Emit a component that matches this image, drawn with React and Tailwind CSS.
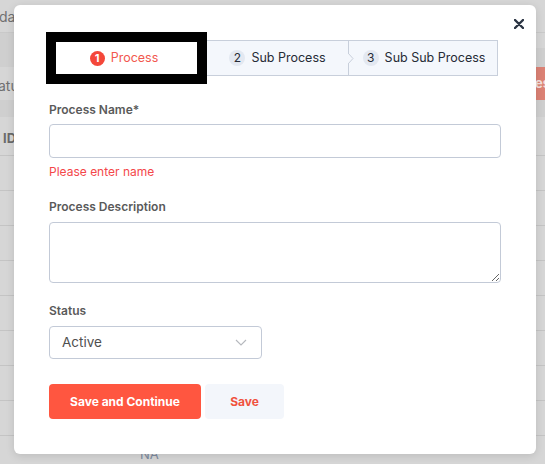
import React from "react";

function Step({ n, label, active }) {
  return (
    <div className="flex items-center gap-[6px]">
      <span
        className={
          active
            ? "flex h-[15px] w-[15px] items-center justify-center rounded-full bg-[#f4473a] text-[11px] font-bold leading-none text-white"
            : "flex h-[16px] w-[16px] items-center justify-center rounded-full bg-[#e3e8f1] text-[12px] leading-none text-[#262b36]"
        }
      >
        {n}
      </span>
      <span className={active ? "text-[12.5px] text-[#f2584f]" : "text-[12.5px] text-[#262b36]"}>{label}</span>
    </div>
  );
}

export default function App() {
  const rows = [0, 1, 2, 3, 4, 5, 6, 7];
  return (
    <div
      className="relative h-[464px] w-[545px] overflow-hidden bg-[#d6d6d6]"
      style={{ fontFamily: "Inter, 'Noto Sans', sans-serif" }}
    >
      {/* background page (dimmed) */}
      <div className="absolute inset-0 flex flex-col text-[#707070]">
        <div className="flex h-[33px] shrink-0 items-center border-b border-[#c9c9c9] text-[14px]">
          <span className="ml-[-1px]">da</span>
        </div>
        <div className="flex h-[34px] shrink-0">
          <div className="flex-1 bg-[#cfcfcf]" />
          <div className="flex w-[9px] flex-col">
            <div className="h-[15px]" />
            <div className="flex-1 bg-[#cfcfcf]" />
          </div>
        </div>
        <div className="flex h-[33px] shrink-0 items-center justify-between text-[14px]">
          <span className="ml-[-2px] mt-[3px]">atu</span>
          <div className="flex h-full w-[10px] items-center overflow-hidden bg-[#dc8275] text-[13px] font-bold text-[#f3e0dd]">
            es
          </div>
        </div>
        <div className="h-[17px] shrink-0 bg-[#cfcfcf]" />
        <div className="flex h-[39px] shrink-0 items-center border-b border-[#c4c4c4] pt-[6px] text-[13px] font-bold text-[#6a6a6a]">
          <span className="ml-[3px]">ID</span>
        </div>
        {rows.map((r) => (
          <div key={r} className="h-[35px] shrink-0 border-b border-[#c4c4c4]" />
        ))}
        <div className="h-[35px] shrink-0 pl-[140px] pt-[9px] text-[13px] text-[#7d8ba0]">NA</div>
      </div>

      {/* modal */}
      <div className="absolute left-[14px] top-[5px] h-[449px] w-[522px] rounded-[6px] bg-white px-[35px] pb-[35px] pt-[27px] shadow-[0_2px_8px_rgba(0,0,0,0.12)]">
        <button className="absolute right-[12px] top-[14px] flex h-[10px] w-[10px] items-center justify-center">
          <svg width="10" height="10" viewBox="0 0 10 10">
            <path d="M1 1L9 9M9 1L1 9" stroke="#2b3443" strokeWidth="2.4" strokeLinecap="round" />
          </svg>
        </button>

        {/* stepper */}
        <div className="ml-[-3px] flex items-center">
          <div className="flex h-[52px] w-[161px] items-center justify-center border-[10px] border-black bg-white pr-[5px]">
            <Step n="1" label="Process" active />
          </div>
          <div className="flex h-[36px] w-[141px] items-center justify-center border-y border-[#c8cfdb] bg-[#f4f7fc]">
            <Step n="2" label="Sub Process" />
          </div>
          <div className="relative flex h-[36px] w-[150px] items-center justify-center border border-[#c8cfdb] bg-[#f4f7fc] pl-[2px]">
            <svg className="absolute left-[-1px] top-[12px]" width="7" height="11" viewBox="0 0 7 11">
              <path d="M0 0L5 5.5L0 11" fill="#f4f7fc" stroke="#c8cfdb" strokeWidth="1" />
            </svg>
            <Step n="3" label="Sub Sub Process" />
          </div>
        </div>

        {/* form */}
        <div className="mt-[18px] flex flex-col">
          <label className="text-[12px] font-semibold leading-[16px] text-[#5a5a5a]">Process Name*</label>
          <input className="mt-[6px] h-[34px] w-full rounded-[4px] border border-[#c3cad7] outline-none" />
          <div className="mt-[6px] text-[12px] leading-[16px] text-[#f4474a]">Please enter name</div>

          <label className="mt-[19px] text-[12px] font-semibold leading-[16px] text-[#5a5a5a]">Process Description</label>
          <textarea className="mt-[7px] h-[61px] w-full resize-y rounded-[4px] border border-[#c3cad7] outline-none" />

          <label className="mt-[20px] text-[12px] font-semibold leading-[16px] text-[#5a5a5a]">Status</label>
          <div className="mt-[7px] flex h-[33px] w-[213px] items-center justify-between rounded-[4px] border border-[#c3cad7] pl-[12px] pr-[14px]">
            <span className="text-[13.5px] text-[#4f4f4f]">Active</span>
            <svg width="12" height="7" viewBox="0 0 12 7">
              <path d="M1 1L6 6L11 1" fill="none" stroke="#b5b8bd" strokeWidth="1.1" />
            </svg>
          </div>

          <div className="mt-[25px] flex gap-[4px]">
            <button className="flex h-[35px] w-[152px] items-center justify-center rounded-[4px] bg-[#ff5640] text-[12px] font-bold text-white">
              Save and Continue
            </button>
            <button className="flex h-[35px] w-[79px] items-center justify-center rounded-[4px] bg-[#f3f6fb] text-[12px] font-bold text-[#f0523e]">
              Save
            </button>
          </div>
        </div>
      </div>
    </div>
  );
}
